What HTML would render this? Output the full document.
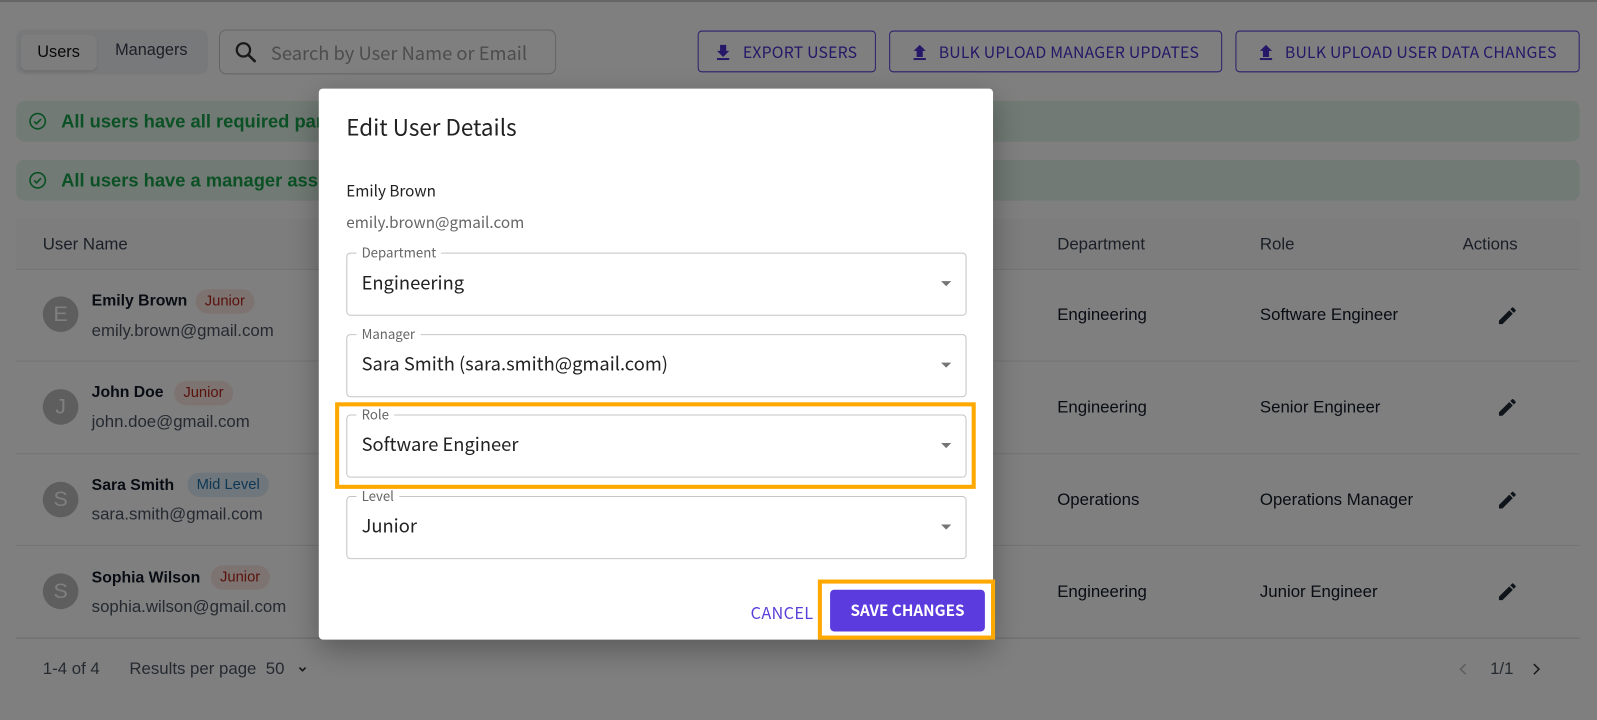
<!DOCTYPE html>
<html><head><meta charset="utf-8"><style>
*{box-sizing:border-box;margin:0;padding:0}
body{width:1597px;height:720px;overflow:hidden;background:#fff;font-family:"Liberation Sans",sans-serif;position:relative;color:#1f2937}
#w{position:absolute;left:0;top:0;width:1568px;height:707px;transform:scale(1.0185);transform-origin:0 0}
.a{position:absolute}
.btn{position:absolute;top:30px;height:41px;border:1px solid #5b3fd9;border-radius:4px;color:#4c2fd0;font-family:"Noto Sans CJK JP","Liberation Sans",sans-serif;font-size:15.5px;display:flex;align-items:center;justify-content:center;gap:12px;letter-spacing:.2px}
.alert{position:absolute;left:16px;width:1535px;height:40px;background:#e3f4e8;border-radius:8px;color:#16a34a;font-weight:bold;font-size:18px;display:flex;align-items:center;padding-left:44px}
.alert svg{position:absolute;left:12px;top:11px}
.line{position:absolute;left:16px;width:1535px;height:1px;background:#e5e7eb}
.av{position:absolute;left:42px;width:35px;height:35px;border-radius:50%;background:#bdbdbd;color:#fff;font-size:21px;display:flex;align-items:center;justify-content:center}
.nm{position:absolute;left:90px;font-size:15.5px;font-weight:bold;color:#111827}
.em{position:absolute;left:90px;font-size:16.5px;color:#4b5563}
.tag{position:absolute;height:24px;border-radius:12px;font-size:14.5px;display:flex;align-items:center;padding:0 9px}
.jr{background:#fbe9e4;color:#b42318}
.md{background:#e0eef8;color:#1c6fa8}
.td{position:absolute;font-size:16.5px;color:#111827}
.pen{position:absolute;left:1469px}
.ov{position:absolute;left:0;top:0;width:1568px;height:707px;background:rgba(0,0,0,.5)}
.modal{position:absolute;left:313px;top:87px;width:662px;height:541px;background:#fff;border-radius:4px;font-family:"Noto Sans CJK JP","Liberation Sans",sans-serif;box-shadow:0 10px 30px rgba(0,0,0,.3)}
.fld{position:absolute;left:27px;width:609px;height:62px;border:1px solid #c4c4c4;border-radius:4px}
.fld .lb{position:absolute;left:9px;top:-10px;background:#fff;padding:0 5px;font-size:13px;color:#666;line-height:18px}
.fld .v{position:absolute;left:14px;top:16px;font-size:18px;color:#222;line-height:24px}
.fld .ar{position:absolute;right:14px;top:27px;width:0;height:0;border-left:5px solid transparent;border-right:5px solid transparent;border-top:5px solid #757575}
</style></head><body><div id="w">
<div class="a" style="left:0;top:0;width:1568px;height:2px;background:#ccc"></div>
<div class="a" style="left:16px;top:29px;width:188px;height:44px;background:#f1f2f4;border-radius:8px"></div>
<div class="a" style="left:20px;top:34px;width:75px;height:35px;background:#fafafa;border-radius:6px;box-shadow:0 1px 2px rgba(0,0,0,.1);font-size:16px;display:flex;align-items:center;justify-content:center;color:#111">Users</div>
<div class="a" style="left:113px;top:41px;font-size:16px;color:#374151">Managers</div>
<div class="a" style="left:215px;top:29px;width:331px;height:44px;border:1px solid #c8c8c8;border-radius:7px"></div>
<svg class="a" style="left:229px;top:39px" width="24" height="24" viewBox="0 0 24 24"><circle cx="10" cy="10" r="6.5" fill="none" stroke="#333" stroke-width="2.2"/><path d="M15 15l6 6" stroke="#333" stroke-width="2.6" stroke-linecap="round"/></svg>
<div class="a" style="left:266px;top:39px;font-size:18px;color:#9a9a9a;font-family:'Noto Sans CJK JP','Liberation Sans',sans-serif">Search by User Name or Email</div>
<div class="btn" style="left:685px;width:175px"><svg width="14" height="16" viewBox="0 0 14 16"><path d="M4 1h6v6h3L7 13 1 7h3z" fill="#4c2fd0"/><rect x="1" y="14" width="12" height="2" fill="#4c2fd0"/></svg>EXPORT USERS</div>
<div class="btn" style="left:873px;width:327px"><svg width="14" height="16" viewBox="0 0 14 16"><path d="M4 13h6V7h3L7 1 1 7h3z" fill="#4c2fd0"/><rect x="1" y="14" width="12" height="2" fill="#4c2fd0"/></svg>BULK UPLOAD MANAGER UPDATES</div>
<div class="btn" style="left:1213px;width:338px"><svg width="14" height="16" viewBox="0 0 14 16"><path d="M4 13h6V7h3L7 1 1 7h3z" fill="#4c2fd0"/><rect x="1" y="14" width="12" height="2" fill="#4c2fd0"/></svg>BULK UPLOAD USER DATA CHANGES</div>
<div class="alert" style="top:99px"><svg width="18" height="18" viewBox="0 0 18 18"><circle cx="9" cy="9" r="7.5" fill="none" stroke="#16a34a" stroke-width="1.6"/><path d="M5.5 9.2l2.3 2.3 4.5-4.6" fill="none" stroke="#16a34a" stroke-width="1.6"/></svg>All users have all required parameters</div>
<div class="alert" style="top:157px"><svg width="18" height="18" viewBox="0 0 18 18"><circle cx="9" cy="9" r="7.5" fill="none" stroke="#16a34a" stroke-width="1.6"/><path d="M5.5 9.2l2.3 2.3 4.5-4.6" fill="none" stroke="#16a34a" stroke-width="1.6"/></svg>All users have a manager assigned</div>
<div class="a" style="left:16px;top:215px;width:1535px;height:49px;background:#fafafa"></div>
<div class="a" style="left:42px;top:231px;font-size:16.5px;color:#374151">User Name</div>
<div class="a" style="left:1038px;top:231px;font-size:16.5px;color:#374151">Department</div>
<div class="a" style="left:1237px;top:231px;font-size:16.5px;color:#374151">Role</div>
<div class="a" style="left:1436px;top:231px;font-size:16.5px;color:#374151">Actions</div>
<div class="line" style="top:264px"></div><div class="line" style="top:354px"></div><div class="line" style="top:445px"></div><div class="line" style="top:535px"></div><div class="line" style="top:626px;background:#d1d5db"></div>

<div class="av" style="top:291px">E</div><div class="nm" style="top:287px">Emily Brown</div><div class="tag jr" style="left:192px;top:284px">Junior</div><div class="em" style="top:316px">emily.brown@gmail.com</div>
<div class="av" style="top:382px">J</div><div class="nm" style="top:377px">John Doe</div><div class="tag jr" style="left:171px;top:374px">Junior</div><div class="em" style="top:405px">john.doe@gmail.com</div>
<div class="av" style="top:473px">S</div><div class="nm" style="top:468px">Sara Smith</div><div class="tag md" style="left:184px;top:464px">Mid Level</div><div class="em" style="top:496px">sara.smith@gmail.com</div>
<div class="av" style="top:563px">S</div><div class="nm" style="top:559px">Sophia Wilson</div><div class="tag jr" style="left:207px;top:555px">Junior</div><div class="em" style="top:587px">sophia.wilson@gmail.com</div>

<div class="td" style="left:1038px;top:300px">Engineering</div><div class="td" style="left:1237px;top:300px">Software Engineer</div>
<div class="td" style="left:1038px;top:391px">Engineering</div><div class="td" style="left:1237px;top:391px">Senior Engineer</div>
<div class="td" style="left:1038px;top:482px">Operations</div><div class="td" style="left:1237px;top:482px">Operations Manager</div>
<div class="td" style="left:1038px;top:572px">Engineering</div><div class="td" style="left:1237px;top:572px">Junior Engineer</div>
<svg class="pen" style="top:299px" width="22" height="22" viewBox="0 0 24 24"><path d="M3 17.25V21h3.75L17.81 9.94l-3.75-3.75L3 17.25zM20.71 7.04a1 1 0 000-1.41l-2.34-2.34a1 1 0 00-1.41 0l-1.830 1.83 3.75 3.75 1.83-1.83z" fill="#1f2937"/></svg>
<svg class="pen" style="top:389px" width="22" height="22" viewBox="0 0 24 24"><path d="M3 17.25V21h3.75L17.81 9.94l-3.75-3.75L3 17.25zM20.71 7.04a1 1 0 000-1.41l-2.34-2.34a1 1 0 00-1.41 0l-1.83 1.83 3.75 3.75 1.83-1.83z" fill="#1f2937"/></svg>
<svg class="pen" style="top:480px" width="22" height="22" viewBox="0 0 24 24"><path d="M3 17.25V21h3.75L17.81 9.94l-3.75-3.75L3 17.25zM20.71 7.04a1 1 0 000-1.41l-2.34-2.34a1 1 0 00-1.41 0l-1.83 1.83 3.75 3.75 1.83-1.83z" fill="#1f2937"/></svg>
<svg class="pen" style="top:570px" width="22" height="22" viewBox="0 0 24 24"><path d="M3 17.25V21h3.75L17.81 9.94l-3.75-3.75L3 17.25zM20.71 7.04a1 1 0 000-1.41l-2.34-2.34a1 1 0 00-1.41 0l-1.83 1.83 3.75 3.75 1.83-1.83z" fill="#1f2937"/></svg>

<div class="a" style="left:42px;top:648px;font-size:16.5px;color:#4b5563">1-4 of 4</div>
<div class="a" style="left:127px;top:648px;font-size:16.5px;color:#4b5563">Results per page&nbsp; 50</div>
<svg class="a" style="left:291px;top:651px" width="12" height="12" viewBox="0 0 12 12"><path d="M3 4.5l3 3 3-3" fill="none" stroke="#333" stroke-width="1.6"/></svg>
<svg class="a" style="left:1431px;top:650px" width="12" height="14" viewBox="0 0 12 14"><path d="M8 2L3 7l5 5" fill="none" stroke="#bbb" stroke-width="1.5"/></svg>
<div class="a" style="left:1463px;top:648px;font-size:16.5px;color:#4b5563">1/1</div>
<svg class="a" style="left:1502px;top:650px" width="12" height="14" viewBox="0 0 12 14"><path d="M4 2l5 5-5 5" fill="none" stroke="#333" stroke-width="1.5"/></svg>

<div class="ov"></div>

<div class="modal">
<div class="a" style="left:27px;top:21px;font-size:22px;color:#222">Edit User Details</div>
<div class="a" style="left:27px;top:90px;font-size:15px;color:#222">Emily Brown</div>
<div class="a" style="left:27px;top:121px;font-size:15px;color:#666">emily.brown@gmail.com</div>
<div class="fld" style="top:161px"><span class="lb">Department</span><span class="v">Engineering</span><span class="ar"></span></div>
<div class="fld" style="top:241px"><span class="lb">Manager</span><span class="v">Sara Smith (sara.smith@gmail.com)</span><span class="ar"></span></div>
<div class="fld" style="top:320px"><span class="lb">Role</span><span class="v">Software Engineer</span><span class="ar"></span></div>
<div class="fld" style="top:400px"><span class="lb">Level</span><span class="v">Junior</span><span class="ar"></span></div>
<div class="a" style="left:424px;top:502px;font-size:16px;color:#5b3fd9;letter-spacing:.3px">CANCEL</div>
<div class="a" style="left:502px;top:492px;width:152px;height:41px;background:#5b3bde;border-radius:4px;color:#fff;font-size:15px;font-weight:bold;display:flex;align-items:center;justify-content:center">SAVE CHANGES</div>
</div>
<div class="a" style="left:329px;top:395px;width:629px;height:85px;border:4px solid #ffa800"></div>
<div class="a" style="left:803px;top:569px;width:174px;height:59px;border:4px solid #ffa800"></div>
</div></body></html>
